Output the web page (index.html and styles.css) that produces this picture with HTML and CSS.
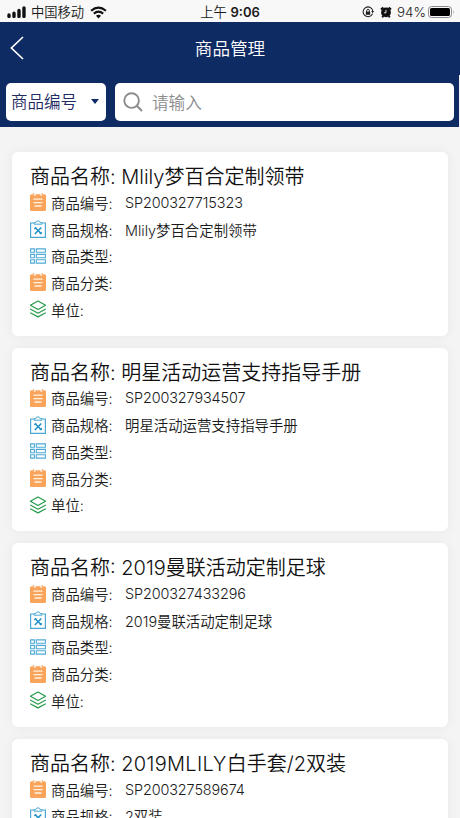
FILE: index.html
```html
<!DOCTYPE html>
<html lang="zh-CN">
  <head>
    <meta charset="UTF-8">
    <meta name="viewport" content="width=device-width, initial-scale=1.0">
    <title>商品管理</title>
    <link rel="stylesheet" href="styles.css">
  </head>
  <body>
    <svg class="sprite">
      <symbol id="icon-note" viewBox="0 0 16 18">
        <path d="M1.5 1.2H3.8V2.8H5.5V1.2H10.5V2.8H12.2V1.2H14.5Q16 1.2 16 2.7V16.5Q16 18 14.5 18H1.5Q0 18 0 16.5V2.7Q0 1.2 1.5 1.2Z" fill="#f9a45a"/>
        <path d="M3.8 0V2M12.2 0V2" stroke="#f9a45a" stroke-width="1"/>
        <path d="M3.5 6.2H12.5M3.5 9.6H12.5M4.5 13H11.5" stroke="#fff3e4" stroke-width="1.3"/>
      </symbol>
      <symbol id="icon-spec" viewBox="0 0 16 18">
        <path d="M.6 3H15.4V17.3H.6Z" fill="none" stroke="#4aa9d4" stroke-width="1.2"/>
        <path d="M4 4.2V2.7H5.8Q6 .8 8 .8T10.2 2.7H12V4.2Z" fill="#fff" stroke="#4aa9d4"/>
        <path d="M5 7.5L11.5 14M11.3 7.5L4.8 14" stroke="#2493c8" stroke-width="1.6"/>
        <path d="M4.3 9L6.2 7.2M9.8 14L11.8 12.2" stroke="#2493c8" stroke-width="1.2"/>
      </symbol>
      <symbol id="icon-type" viewBox="0 0 16 16">
        <path d="M.6 .9H4.4V4.2H.6ZM.6 6.4H4.4V9.7H.6ZM.6 11.8H4.4V15.1H.6ZM6.3 .9H15.4V4.2H6.3ZM6.3 6.4H15.4V9.7H6.3ZM6.3 11.8H15.4V15.1H6.3Z" fill="none" stroke="#4fabd6" stroke-width="1.1"/>
      </symbol>
      <symbol id="icon-unit" viewBox="0 0 16 18">
        <path d="M8 1L15.6 5.3L8 9.6L.4 5.3ZM.2 9L8 13.2L15.8 9M.2 12.7L8 16.9L15.8 12.7" fill="none" stroke="#279b4c" stroke-width="1.2" stroke-linejoin="round"/>
      </symbol>
    </svg>

    <div class="status-bar">
      <svg class="signal" viewBox="0 0 20 12">
        <path d="M2 9V10.4M7 7.2V10.4M12 4.4V10.4M17 2V10.4" stroke="#111" stroke-width="3.4" stroke-linecap="round"/>
      </svg>
      <span class="carrier">中国移动</span>
      <svg class="wifi" viewBox="0 0 16 12">
        <path d="M1 4.4Q8 -1.6 15 4.4M3.6 7.1Q8 3.4 12.4 7.1" fill="none" stroke="#111" stroke-width="2"/>
        <path d="M5.6 9.1Q8 7.3 10.4 9.1L8 11.6Z" fill="#111"/>
      </svg>
      <span class="time">上午 <b>9:06</b></span>
      <svg class="lock" viewBox="0 0 12 12">
        <path d="M10.6 7.6A4.9 4.9 0 1 1 10.9 5.2" fill="none" stroke="#222" stroke-width="1.1"/>
        <path d="M9.2 5H12L10.7 7.2Z" fill="#222"/>
        <path d="M3.8 5.6H8.2V8.8H3.8Z" fill="#222"/>
        <path d="M4.7 6V4.6A1.3 1.3 0 0 1 7.3 4.6V6" fill="none" stroke="#222"/>
      </svg>
      <svg class="alarm" viewBox="0 0 12 12">
        <circle cx="6" cy="6.4" r="4.9" fill="#111"/>
        <path d="M1 3.6L3.4 1.4M11 3.6L8.6 1.4M2.2 11.2L3.4 10M9.8 11.2L8.6 10" stroke="#111" stroke-width="2"/>
        <path d="M6 3.8V6.8H4" fill="none" stroke="#f8f8f8" stroke-width=".9"/>
      </svg>
      <span class="percent">94%</span>
      <svg class="battery" viewBox="0 0 27 12">
        <rect x=".5" y=".5" width="23" height="11" rx="3" fill="none" stroke="#8a8a8a"/>
        <rect x="2" y="2" width="20" height="8" rx="1.6" fill="#000"/>
        <path d="M25.2 4.2Q26.6 6 25.2 7.8Z" fill="#8a8a8a"/>
      </svg>
    </div>

    <header class="nav">
      <svg class="back" viewBox="0 0 14 24">
        <path d="M13 1L1.4 12L13 23" fill="none" stroke="#fff" stroke-width="1.7"/>
      </svg>
      <h1>商品管理</h1>
    </header>

    <div class="search">
      <div class="select">商品编号<span class="caret"></span></div>
      <div class="field">
        <svg class="glass" viewBox="0 0 20 20">
          <circle cx="8.6" cy="8.6" r="7.3" fill="none" stroke="#8c8c8c" stroke-width="1.9"/>
          <path d="M13.8 13.8L19 19" stroke="#8c8c8c" stroke-width="2"/>
        </svg>
        <span>请输入</span>
      </div>
    </div>

    <main class="list">
      <section class="card">
        <h2>商品名称: Mlily梦百合定制领带</h2>
        <div class="row"><svg><use href="#icon-note"/></svg><label>商品编号:</label><span class="code">SP200327715323</span></div>
        <div class="row"><svg><use href="#icon-spec"/></svg><label>商品规格:</label><span>Mlily梦百合定制领带</span></div>
        <div class="row"><svg><use href="#icon-type"/></svg><label>商品类型:</label></div>
        <div class="row"><svg><use href="#icon-note"/></svg><label>商品分类:</label></div>
        <div class="row"><svg><use href="#icon-unit"/></svg><label>单位:</label></div>
      </section>
      <section class="card">
        <h2>商品名称: 明星活动运营支持指导手册</h2>
        <div class="row"><svg><use href="#icon-note"/></svg><label>商品编号:</label><span class="code">SP200327934507</span></div>
        <div class="row"><svg><use href="#icon-spec"/></svg><label>商品规格:</label><span>明星活动运营支持指导手册</span></div>
        <div class="row"><svg><use href="#icon-type"/></svg><label>商品类型:</label></div>
        <div class="row"><svg><use href="#icon-note"/></svg><label>商品分类:</label></div>
        <div class="row"><svg><use href="#icon-unit"/></svg><label>单位:</label></div>
      </section>
      <section class="card">
        <h2>商品名称: 2019曼联活动定制足球</h2>
        <div class="row"><svg><use href="#icon-note"/></svg><label>商品编号:</label><span class="code">SP200327433296</span></div>
        <div class="row"><svg><use href="#icon-spec"/></svg><label>商品规格:</label><span>2019曼联活动定制足球</span></div>
        <div class="row"><svg><use href="#icon-type"/></svg><label>商品类型:</label></div>
        <div class="row"><svg><use href="#icon-note"/></svg><label>商品分类:</label></div>
        <div class="row"><svg><use href="#icon-unit"/></svg><label>单位:</label></div>
      </section>
      <section class="card">
        <h2>商品名称: <span class="brand">2019MLILY</span>白手套/2双装</h2>
        <div class="row"><svg><use href="#icon-note"/></svg><label>商品编号:</label><span class="code">SP200327589674</span></div>
        <div class="row"><svg><use href="#icon-spec"/></svg><label>商品规格:</label><span>2双装</span></div>
      </section>
    </main>
  </body>
</html>
```
FILE: styles.css
```css
* {
    box-sizing: border-box;
}
body {
    margin: 0;
    height: 818px;
    overflow: hidden;
    background-color: #f4f4f4;
    color: #1a1a1a;
    font-family: Inter, "Noto Sans CJK SC", sans-serif;
    font-weight: 350;
}
.sprite {
    display: none;
}
.status-bar {
    height: 22px;
    display: flex;
    align-items: center;
    padding: 2px 5px 0 7px;
    background-color: #f8f8f8;
    font-size: 13.3px;
    line-height: 20px;
    white-space: nowrap;
}
.signal {
    width: 20px;
    height: 12px;
}
.carrier {
    margin-left: 4px;
}
.wifi {
    width: 17px;
    height: 13px;
    margin-left: 6px;
}
.time {
    margin-left: 93px;
    width: 162px;
}
.time b {
    font-weight: 600;
    font-size: 13px;
}
.lock, .alarm {
    width: 12px;
    height: 12px;
}
.alarm {
    margin-left: 6px;
}
.percent {
    margin-left: 5px;
    width: 31px;
}
.battery {
    width: 27px;
    height: 12px;
}
.nav {
    height: 53px;
    display: flex;
    align-items: center;
    padding: 0 0 2px 10px;
    background-color: #0e2b64;
    color: #fff;
}
.back {
    width: 14px;
    height: 24px;
}
.nav h1 {
    flex: 1;
    margin: 0 24px 0 0;
    text-align: center;
    font-size: 17.6px;
    font-weight: 350;
}
.search {
    width: 458.5px;
    height: 51.5px;
    display: flex;
    gap: 9px;
    padding: 8px 5px 6px 6px;
    background-color: #0e2b64;
}
.select {
    width: 100px;
    display: flex;
    align-items: center;
    padding: 0 0 1px 5px;
    border-radius: 5px;
    background-color: #fff;
    color: #1f2c63;
    font-size: 16.5px;
}
.caret {
    margin: 1px 0 0 14px;
    border: 4px solid transparent;
    border-top: 5px solid #0e2b64;
    border-bottom: 0;
}
.field {
    flex: 1;
    display: flex;
    align-items: center;
    padding-left: 8px;
    border-radius: 5px;
    background-color: #fff;
    color: #8c8c8c;
    font-size: 16.6px;
}
.glass {
    width: 20px;
    height: 20px;
    margin-right: 9px;
}
.list {
    padding: 25.5px 12px 0;
}
.card {
    height: 183.6px;
    margin-bottom: 12px;
    padding: 12px 18px 0;
    border-radius: 6px;
    background-color: #fff;
    box-shadow: 0 0 12px rgba(0, 0, 0, 0.05);
}
.card h2 {
    margin: 0;
    height: 25px;
    line-height: 27px;
    font-size: 20px;
    font-weight: 350;
    color: #111;
    white-space: nowrap;
}
.brand {
    letter-spacing: 0.3px;
}
.row {
    height: 26.7px;
    display: flex;
    align-items: center;
    font-size: 14.4px;
    white-space: nowrap;
}
.row svg {
    width: 16px;
    height: 18px;
    margin-right: 5px;
}
.row label {
    width: 74px;
}
.code {
    letter-spacing: -0.1px;
}
```
